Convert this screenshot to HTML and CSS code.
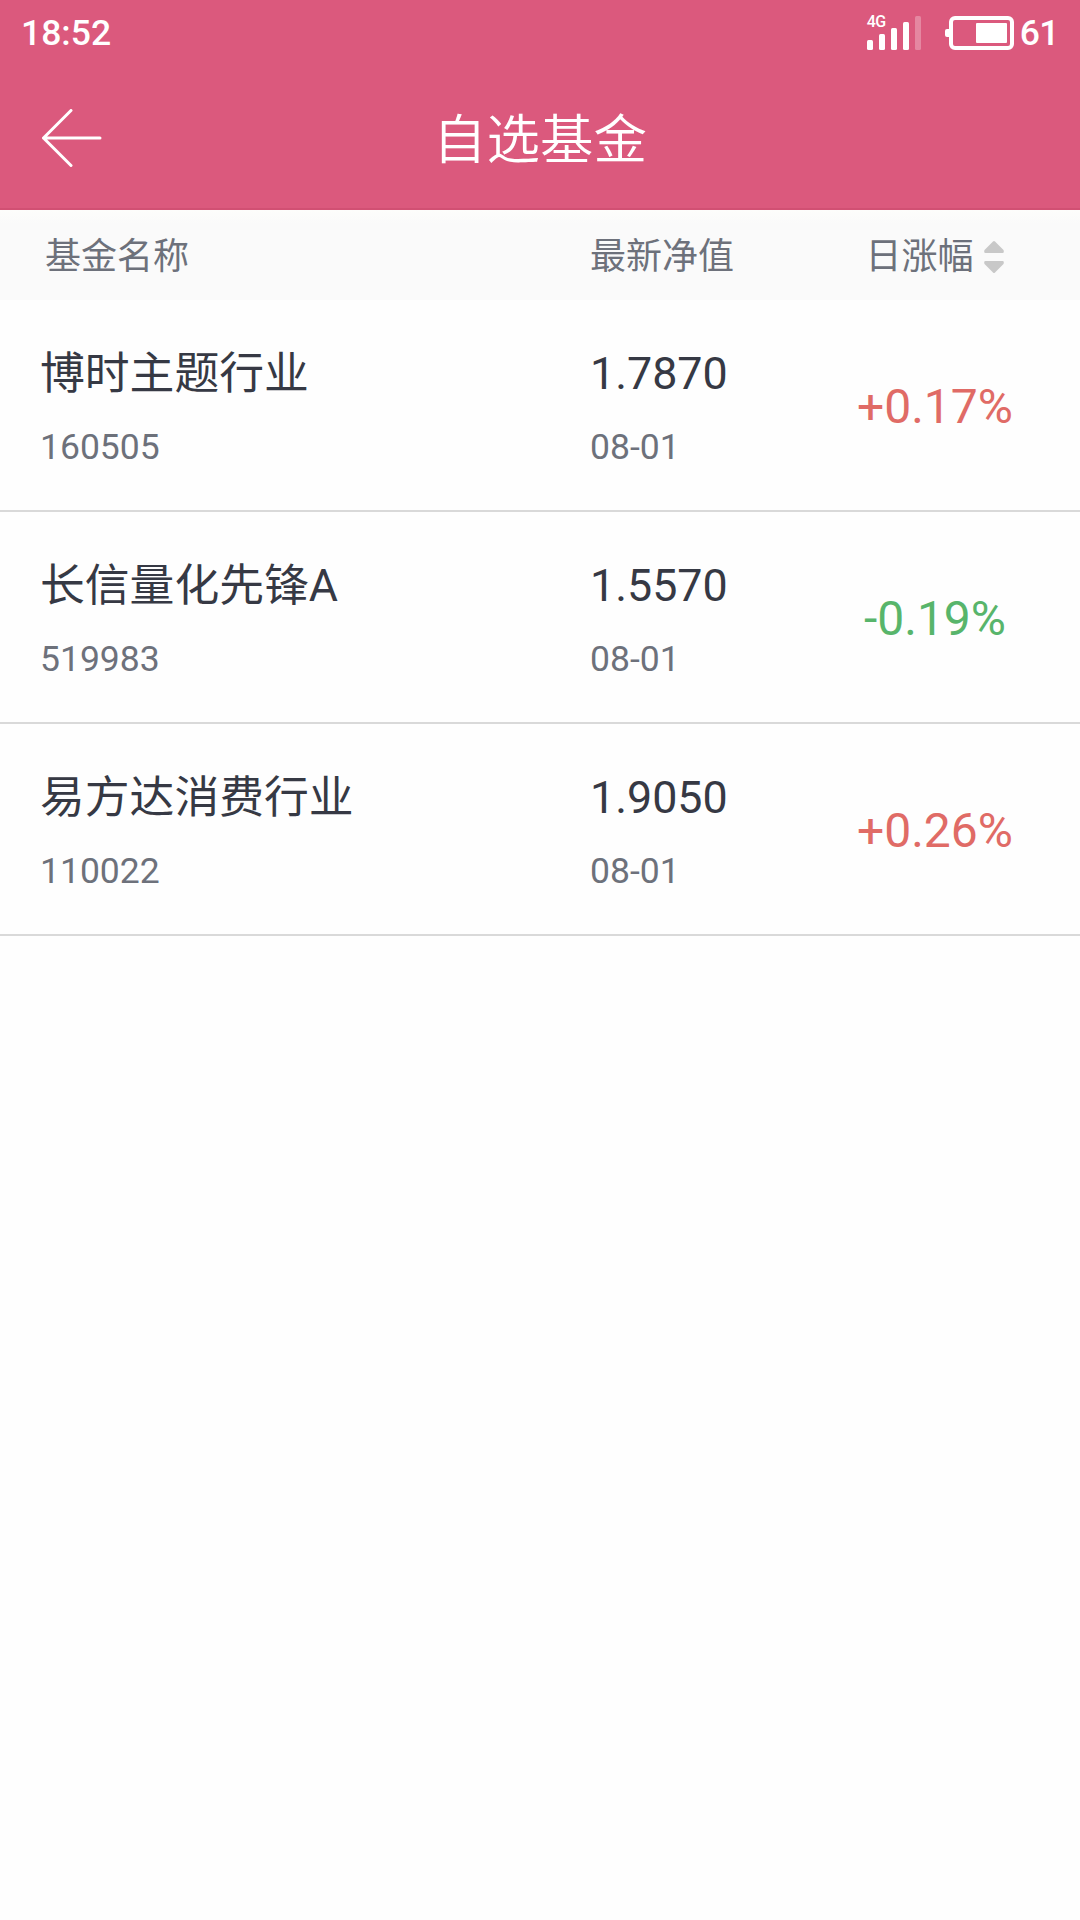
FILE: index.html
```
<!DOCTYPE html>
<html lang="zh-CN">
<head>
    <meta charset="UTF-8">
    <meta name="viewport" content="width=device-width, initial-scale=1.0">
    <title>自选基金</title>
    <link rel="stylesheet" href="styles.css">
</head>
<body>

    <header>
        <div class="status-bar">
            <span class="time">18:52</span>
            <div class="status-icons">
                <div class="network">
                    <svg class="signal" width="54" height="34" viewBox="0 0 54 34" fill="#fff">
                        <rect x="0" y="24" width="6" height="10" rx="1.5"/>
                        <rect x="12" y="18" width="6" height="16" rx="1.5"/>
                        <rect x="24" y="12" width="6" height="22" rx="1.5"/>
                        <rect x="36" y="6" width="6" height="28" rx="1.5"/>
                        <rect x="48" y="0" width="6" height="34" rx="1.5" opacity="0.28"/>
                    </svg>
                    <span class="network-type">4G</span>
                </div>
                <svg class="battery" width="69" height="34" viewBox="0 0 69 34">
                    <rect x="0" y="13" width="6" height="8" rx="2" fill="#fff"/>
                    <rect x="6" y="2" width="61" height="30" rx="4" fill="none" stroke="#fff" stroke-width="4"/>
                    <rect x="31" y="7" width="31" height="20" rx="1" fill="#fff"/>
                </svg>
                <span class="battery-level">61</span>
            </div>
        </div>
        <div class="nav-bar">
            <a href="#" class="back" aria-label="返回">
                <svg width="60" height="58" viewBox="0 0 60 58" fill="none" stroke="#fff" stroke-width="3" stroke-linecap="round" stroke-linejoin="round">
                    <path d="M29 1.500L1.500 29L29 56.500M1.500 29H58"/>
                </svg>
            </a>
            <h1>自选基金</h1>
        </div>
    </header>

    <main>
        <div class="table-head">
            <span class="head-name">基金名称</span>
            <span>最新净值</span>
            <span class="head-change">日涨幅
                <svg width="22" height="34" viewBox="0 0 22 34" fill="#c8c8c8">
                    <path d="M10 1.500Q11 .5 12 1.500L20.500 10Q21.500 13 19.500 13H2.500Q.5 13 1.500 10Z"/>
                    <path d="M10 32.500Q11 33.500 12 32.500L20.500 24Q21.500 21 19.500 21H2.500Q.5 21 1.500 24Z"/>
                </svg>
            </span>
        </div>

        <div class="fund">
            <div>
                <div class="name">博时主题行业</div>
                <div class="sub">160505</div>
            </div>
            <div>
                <div class="value">1.7870</div>
                <div class="sub">08-01</div>
            </div>
            <div class="change up">+0.17%</div>
        </div>

        <div class="fund">
            <div>
                <div class="name">长信量化先锋A</div>
                <div class="sub">519983</div>
            </div>
            <div>
                <div class="value">1.5570</div>
                <div class="sub">08-01</div>
            </div>
            <div class="change down">-0.19%</div>
        </div>

        <div class="fund">
            <div>
                <div class="name">易方达消费行业</div>
                <div class="sub">110022</div>
            </div>
            <div>
                <div class="value">1.9050</div>
                <div class="sub">08-01</div>
            </div>
            <div class="change up">+0.26%</div>
        </div>
    </main>

</body>
</html>
```
FILE: styles.css
```
* { box-sizing: border-box; }
body { margin: 0; min-height: 1920px; font-family: Roboto, "Noto Sans CJK SC", sans-serif; font-weight: 385; background-color: #fefefe; color: #363944; }
svg { display: block; }

header { height: 210px; background-color: #db597d; border-bottom: 2px solid #d15073; color: white; }
.status-bar { display: flex; justify-content: space-between; height: 66px; padding: 0 21px; font-size: 35.5px; font-weight: 500; line-height: 67px; }
.status-icons { display: flex; padding-top: 16px; line-height: 35px; }
.network { position: relative; margin-right: 24px; }
.network-type { position: absolute; left: 0; top: -2px; font-size: 16px; line-height: 16px; letter-spacing: -0.5px; }
.battery { margin-right: 6px; }
.battery-level { letter-spacing: -0.5px; }
.nav-bar { display: grid; grid-template-columns: 140px 1fr 140px; align-items: center; height: 142px; }
.back { padding-left: 42px; padding-top: 2px; }
h1 { margin: 0; padding-top: 8px; font-size: 53.5px; font-weight: 350; line-height: 80px; text-align: center; }

.table-head, .fund { display: grid; grid-template-columns: 550px 200px 290px; padding-left: 40px; }
.table-head { height: 90px; align-items: center; background: linear-gradient(#fdfdfb, #fafafa 14px); color: #6d717b; font-size: 36px; line-height: 54px; padding-top: 4px; }
.head-name { padding-left: 5px; }
.head-change { display: flex; align-items: center; justify-content: center; gap: 9px; }

.fund { height: 212px; border-bottom: 2px solid #d9d9d9; }
.name, .value { height: 60px; margin-top: 44px; font-size: 44.8px; line-height: 60px; }
.sub { margin-top: 22px; font-size: 35.5px; line-height: 42px; color: #6d717b; }
.change { align-self: center; padding-top: 2px; font-size: 48px; text-align: center; }
.up { color: #e06b66; }
.down { color: #58b56b; }
```
